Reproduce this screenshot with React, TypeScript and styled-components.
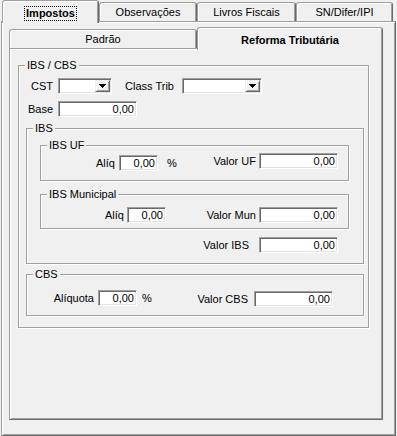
import React from 'react';
import styled, { createGlobalStyle } from 'styled-components';

const GlobalStyle = createGlobalStyle`
  html, body {
    margin: 0;
    padding: 0;
    background: #f0f0f0;
  }
  body {
    font-family: "Liberation Sans", Arial, sans-serif;
    font-size: 11px;
    color: #000;
  }
`;

const Window = styled.div`
  width: 397px;
  height: 436px;
  box-sizing: border-box;
  padding: 0 1px;
  display: flex;
  flex-direction: column;
  overflow: hidden;
`;

const TabControl = styled.div`
  flex: 1;
  min-height: 0;
  display: flex;
  flex-direction: column;
`;

const TabStrip = styled.div<{ $indent?: number }>`
  flex-shrink: 0;
  height: 21px;
  display: flex;
  align-items: flex-end;
  padding-left: ${p => p.$indent ?? 0}px;
`;

const Tab = styled.div<{ $w?: number; $active?: boolean }>`
  box-sizing: border-box;
  ${p => (p.$w ? `width: ${p.$w}px;` : 'flex: 1;')}
  height: ${p => (p.$active ? 23 : 19)}px;
  margin-bottom: ${p => (p.$active ? -2 : 0)}px;
  padding-top: ${p => (p.$active ? 2 : 0)}px;
  position: relative;
  z-index: ${p => (p.$active ? 1 : 0)};
  background: #f0f0f0;
  border: 1px solid #a0a0a0;
  border-right-color: #696969;
  border-bottom: none;
  border-radius: 3px 3px 0 0;
  box-shadow: inset 1px 1px 0 #fff, inset -1px 0 0 #a0a0a0;
  display: flex;
  align-items: center;
  justify-content: center;
  font-weight: ${p => (p.$active ? 'bold' : 'normal')};
  white-space: nowrap;
`;

const FocusText = styled.span`
  line-height: 13px;
  padding: 0 1px;
  outline: 1px dotted #000;
`;

const Page = styled.div<{ $pad: string }>`
  flex: 1;
  min-height: 0;
  box-sizing: border-box;
  display: flex;
  flex-direction: column;
  background: #f0f0f0;
  border: 1px solid;
  border-color: #a0a0a0 #696969 #696969 #a0a0a0;
  box-shadow: inset 1px 1px 0 #fff, inset -1px -1px 0 #a0a0a0;
  padding: ${p => p.$pad};
`;

const Group = styled.fieldset<{ $mt?: number }>`
  margin: ${p => p.$mt ?? 0}px 0 0 0;
  padding: 0;
  min-width: 0;
  border: 1px solid #a0a0a0;
  box-shadow: inset 1px 1px 0 #fff, 1px 1px 0 #fff;
`;

const Legend = styled.legend`
  margin-left: 6px;
  padding: 0 2px;
  line-height: 13px;
  font-size: 11px;
  background: #f0f0f0;
`;

const GroupBody = styled.div<{ $pad: string }>`
  display: flex;
  flex-direction: column;
  padding: ${p => p.$pad};
`;

const Row = styled.div<{ $mt?: number }>`
  display: flex;
  align-items: flex-start;
  margin-top: ${p => p.$mt ?? 0}px;
`;

const Field = styled.div<{ $gap?: number; $dy?: number }>`
  display: flex;
  align-items: center;
  gap: ${p => p.$gap ?? 3}px;
  margin-top: ${p => p.$dy ?? 0}px;
`;

const Caption = styled.label<{ $w: number }>`
  flex-shrink: 0;
  width: ${p => p.$w}px;
  text-align: right;
  line-height: 16px;
  white-space: nowrap;
`;

const Unit = styled.span<{ $ml: number }>`
  margin-left: ${p => p.$ml}px;
  width: 8px;
  line-height: 16px;
`;

const Edit = styled.input<{ $w: number }>`
  box-sizing: border-box;
  width: ${p => p.$w}px;
  height: 16px;
  margin: 0;
  padding: 0 2px 0 0;
  text-align: right;
  font: inherit;
  color: #000;
  background: #fff;
  border: 1px solid;
  border-color: #a0a0a0 #fff #fff #a0a0a0;
  box-shadow: inset 1px 1px 0 #696969, inset -1px -1px 0 #e3e3e3;
  outline: none;
`;

const Combo = styled.div<{ $w: number }>`
  box-sizing: border-box;
  width: ${p => p.$w}px;
  height: 16px;
  padding: 1px;
  display: flex;
  justify-content: flex-end;
  background: #fff;
  border: 1px solid;
  border-color: #a0a0a0 #fff #fff #a0a0a0;
  box-shadow: inset 1px 1px 0 #696969, inset -1px -1px 0 #e3e3e3;
`;

const DropButton = styled.span`
  box-sizing: border-box;
  width: 15px;
  height: 12px;
  background: #f0f0f0;
  border: 1px solid;
  border-color: #f0f0f0 #696969 #696969 #f0f0f0;
  box-shadow: inset 1px 1px 0 #fff, inset -1px -1px 0 #a0a0a0;
  display: flex;
  align-items: center;
  justify-content: center;
`;

const Arrow = () => (
  <svg width="7" height="4" viewBox="0 0 7 4" shapeRendering="crispEdges">
    <path d="M0 0h7v1h-1v1h-1v1h-1v1h-1v-1h-1v-1h-1v-1h-1z" fill="#000" />
  </svg>
);

const Select = ({ w }: { w: number }) => (
  <Combo $w={w}>
    <DropButton>
      <Arrow />
    </DropButton>
  </Combo>
);

export default function App() {
  return (
    <>
      <GlobalStyle />
      <Window>
        <TabControl>
          <TabStrip $indent={1}>
            <Tab $w={97} $active>
              <FocusText>Impostos</FocusText>
            </Tab>
            <Tab $w={98}>Observações</Tab>
            <Tab $w={99}>Livros Fiscais</Tab>
            <Tab $w={97}>SN/Difer/IPI</Tab>
          </TabStrip>
          <Page $pad="5px 12px 15px 7px">
            <TabControl>
              <TabStrip>
                <Tab $w={188}>Padrão</Tab>
                <Tab $active>Reforma Tributária</Tab>
              </TabStrip>
              <Page $pad="10px 13px 0 8px">
                <Group>
                  <Legend>IBS / CBS</Legend>
                  <GroupBody $pad="6px 4px 11px 7px">
                    <Row>
                      <Field $gap={5}>
                        <Caption $w={27}>CST</Caption>
                        <Select w={54} />
                      </Field>
                      <Field $gap={8}>
                        <Caption $w={62}>Class Trib</Caption>
                        <Select w={80} />
                      </Field>
                    </Row>
                    <Row $mt={7}>
                      <Field $gap={5}>
                        <Caption $w={27}>Base</Caption>
                        <Edit $w={79} readOnly value="0,00" />
                      </Field>
                    </Row>

                    <Group $mt={5}>
                      <Legend>IBS</Legend>
                      <GroupBody $pad="4px 14px 10px 13px">
                        <Group>
                          <Legend>IBS UF</Legend>
                          <GroupBody $pad="1px 0 9px 0">
                            <Row>
                              <Field $gap={4} $dy={2}>
                                <Caption $w={74}>Alíq</Caption>
                                <Edit $w={39} readOnly value="0,00" />
                                <Unit $ml={5}>%</Unit>
                              </Field>
                              <Field>
                                <Caption $w={81}>Valor UF</Caption>
                                <Edit $w={79} readOnly value="0,00" />
                              </Field>
                            </Row>
                          </GroupBody>
                        </Group>

                        <Group $mt={7}>
                          <Legend>IBS Municipal</Legend>
                          <GroupBody $pad="6px 0 5px 0">
                            <Row>
                              <Field>
                                <Caption $w={83}>Alíq</Caption>
                                <Edit $w={39} readOnly value="0,00" />
                              </Field>
                              <Field>
                                <Caption $w={90}>Valor Mun</Caption>
                                <Edit $w={79} readOnly value="0,00" />
                              </Field>
                            </Row>
                          </GroupBody>
                        </Group>

                        <Row $mt={8}>
                          <Field $gap={10}>
                            <Caption $w={209}>Valor IBS</Caption>
                            <Edit $w={79} readOnly value="0,00" />
                          </Field>
                        </Row>
                      </GroupBody>
                    </Group>

                    <Group $mt={4}>
                      <Legend>CBS</Legend>
                      <GroupBody $pad="9px 0 8px 0">
                        <Row>
                          <Field $gap={4}>
                            <Caption $w={67}>Alíquota</Caption>
                            <Edit $w={39} readOnly value="0,00" />
                            <Unit $ml={1}>%</Unit>
                          </Field>
                          <Field $gap={6} $dy={1}>
                            <Caption $w={98}>Valor CBS</Caption>
                            <Edit $w={79} readOnly value="0,00" />
                          </Field>
                        </Row>
                      </GroupBody>
                    </Group>
                  </GroupBody>
                </Group>
              </Page>
            </TabControl>
          </Page>
        </TabControl>
      </Window>
    </>
  );
}
